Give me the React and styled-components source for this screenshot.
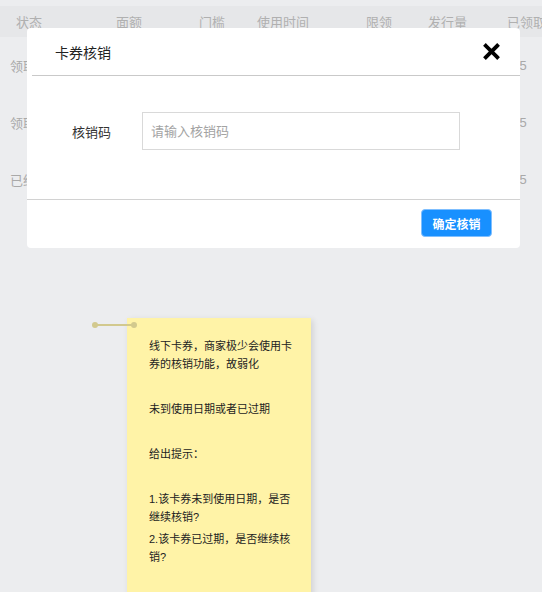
import React from "react";
import styled, { createGlobalStyle } from "styled-components";

const GlobalStyle = createGlobalStyle`
  html, body {
    margin: 0;
    padding: 0;
    height: 592px;
    overflow: hidden;
    background: #ecedef;
    font-family: "Liberation Sans", "Noto Sans CJK SC", sans-serif;
  }
`;

const Page = styled.div`
  position: relative;
  width: 542px;
  height: 592px;
  padding-top: 6px;
  box-sizing: border-box;
  overflow: hidden;
`;

const COLS = "100px 83px 58px 109px 62px 79px 1fr";

const HeadRow = styled.div`
  display: grid;
  grid-template-columns: ${COLS};
  height: 31px;
  align-items: center;
  background: #e6e7e9;
`;

const HeadCell = styled.div`
  padding-left: 16px;
  font-size: 13px;
  color: #b0b0b0;
  white-space: nowrap;
`;

const Row = styled.div`
  display: grid;
  grid-template-columns: ${COLS};
  height: 57px;
  align-items: center;
`;

const Cell = styled.div`
  padding-left: ${(p) => p.$pad || 10}px;
  font-size: 13px;
  color: #a9a9a9;
  white-space: nowrap;
  margin-top: -1px;
`;

const Modal = styled.div`
  position: absolute;
  left: 27px;
  top: 28px;
  width: 493px;
  background: #fff;
  border-radius: 4px;
  display: flex;
  flex-direction: column;
`;

const ModalHead = styled.div`
  display: flex;
  align-items: center;
  justify-content: space-between;
  height: 47px;
  margin-left: 5px;
  padding: 0 20px 0 23px;
  border-bottom: 1px solid #c9c9c9;
`;

const Title = styled.div`
  font-size: 14px;
  color: #222;
`;

const CloseBtn = styled.button`
  border: 0;
  background: none;
  padding: 0;
  width: 17px;
  height: 17px;
  display: flex;
  cursor: pointer;
`;

const ModalBody = styled.div`
  display: flex;
  align-items: center;
  padding: 36px 0 49px 45px;
`;

const Label = styled.label`
  width: 70px;
  font-size: 13px;
  color: #333;
`;

const Input = styled.input`
  width: 318px;
  height: 38px;
  box-sizing: border-box;
  border: 1px solid #d9d9d9;
  padding: 0 8px;
  font-size: 13px;
  font-family: inherit;
  color: #333;
  outline: none;
  &::placeholder {
    color: #a3a3a3;
  }
`;

const ModalFoot = styled.div`
  display: flex;
  justify-content: flex-end;
  border-top: 1px solid #d2d2d2;
  padding: 9px 28px 11px 0;
`;

const Primary = styled.button`
  width: 71px;
  height: 28px;
  border: 1px solid #7fbfff;
  border-radius: 4px;
  background: #1890ff;
  color: #fff;
  font-size: 12px;
  font-weight: 600;
  font-family: inherit;
  cursor: pointer;
`;

const Note = styled.div`
  position: absolute;
  left: 127px;
  top: 318px;
  width: 184px;
  height: 300px;
  box-sizing: border-box;
  padding: 19px 0 0 22px;
  background: #fff3a7;
  box-shadow: 2px 2px 6px rgba(0, 0, 0, 0.12);
  display: flex;
  flex-direction: column;
  gap: 4px;
`;

const NoteLine = styled.p`
  margin: 0;
  width: 146px;
  font-size: 11px;
  line-height: 18px;
  color: #222;
  min-height: ${(p) => (p.$empty ? 19 : 18)}px;
`;

const Connector = styled.svg`
  position: absolute;
  left: 91px;
  top: 320px;
`;

const headers = ["状态", "面额", "门槛", "使用时间", "限领", "发行量", "已领取"];
const rows = ["领取中", "领取中", "已结束"];

export default function App() {
  return (
    <Page>
      <GlobalStyle />
      <HeadRow>
        {headers.map((h) => (
          <HeadCell key={h}>{h}</HeadCell>
        ))}
      </HeadRow>
      {rows.map((r, i) => (
        <Row key={i}>
          <Cell>{r}</Cell>
          <Cell>10元</Cell>
          <Cell>无</Cell>
          <Cell>2019-01-01</Cell>
          <Cell>1</Cell>
          <Cell>500</Cell>
          <Cell $pad={14}>125</Cell>
        </Row>
      ))}

      <Modal>
        <ModalHead>
          <Title>卡券核销</Title>
          <CloseBtn aria-label="关闭">
            <svg width="17" height="17" viewBox="0 0 17 17">
              <path
                d="M2.8 2.8 L14.2 14.2 M14.2 2.8 L2.8 14.2"
                stroke="#000"
                strokeWidth="3.8"
                strokeLinecap="square"
              />
            </svg>
          </CloseBtn>
        </ModalHead>
        <ModalBody>
          <Label>核销码</Label>
          <Input placeholder="请输入核销码" />
        </ModalBody>
        <ModalFoot>
          <Primary>确定核销</Primary>
        </ModalFoot>
      </Modal>

      <Note>
        <NoteLine>线下卡券，商家极少会使用卡券的核销功能，故弱化</NoteLine>
        <NoteLine $empty />
        <NoteLine>未到使用日期或者已过期</NoteLine>
        <NoteLine $empty />
        <NoteLine>给出提示：</NoteLine>
        <NoteLine $empty />
        <NoteLine>1.该卡券未到使用日期，是否继续核销?</NoteLine>
        <NoteLine>2.该卡券已过期，是否继续核销?</NoteLine>
      </Note>

      <Connector width="46" height="10" viewBox="0 0 46 10">
        <line x1="4" y1="5" x2="43" y2="5" stroke="#d2c98e" strokeWidth="2" />
        <circle cx="4" cy="5" r="3" fill="#d2c98e" />
        <circle cx="43" cy="5" r="3" fill="#d2c98e" />
      </Connector>
    </Page>
  );
}
